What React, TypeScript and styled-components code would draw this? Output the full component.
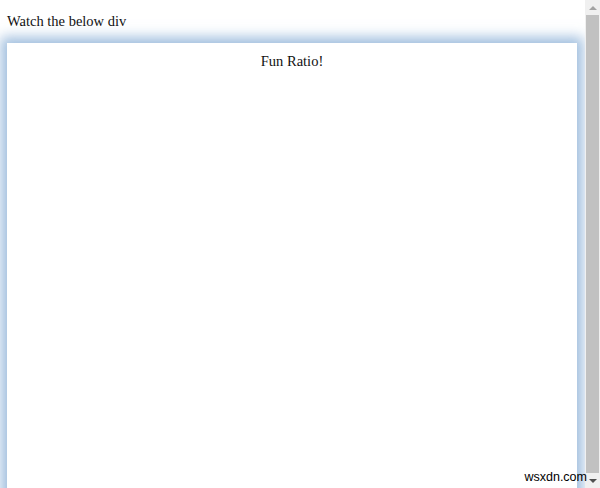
import React from 'react';
import styled, { createGlobalStyle } from 'styled-components';

const GlobalStyle = createGlobalStyle`
    html, body {
        margin: 0;
        padding: 0;
        overflow: hidden;
        background: white;
    }
`;

const Window = styled.div`
    position: relative;
    width: 600px;
    height: 488px;
    display: flex;
    flex-direction: row;
    background: white;
    overflow: hidden;
`;

const Page = styled.div`
    flex: 1;
    padding: 12px 8px 0 7px;
    font-family: "Liberation Serif", "Times New Roman", serif;
    font-size: 14.5px;
    color: #111;
`;

const Intro = styled.div`
    line-height: 18px;
    margin-bottom: 13px;
`;

const GlowBox = styled.div`
    height: 460px;
    background: white;
    box-shadow: 0 0 12px 6px rgba(120, 162, 208, 0.7);
    text-align: center;
    padding-top: 10px;
    line-height: 17px;
`;

const Scrollbar = styled.div`
    width: 15px;
    display: flex;
    flex-direction: column;
    align-items: center;
    background: #f0f0f0;
`;

const Arrow = styled.div<{ $down?: boolean }>`
    height: 15px;
    width: 100%;
    display: flex;
    align-items: center;
    justify-content: center;
    &::after {
        content: '';
        border-left: 4px solid transparent;
        border-right: 4px solid transparent;
        ${p => p.$down ? 'border-top: 4px solid #505050;' : 'border-bottom: 4px solid #a3a3a3;'}
    }
`;

const Thumb = styled.div`
    flex: 1;
    width: 13px;
    background: #c1c1c1;
`;

const Watermark = styled.span`
    position: absolute;
    right: 13px;
    bottom: 4px;
    font-family: "Liberation Sans", Arial, sans-serif;
    font-size: 12.5px;
    line-height: 14px;
    color: #000;
`;

const App = () => {
    return (
        <Window>
            <GlobalStyle />
            <Page>
                <Intro>Watch the below div</Intro>
                <GlowBox>Fun Ratio!</GlowBox>
            </Page>
            <Scrollbar>
                <Arrow />
                <Thumb />
                <Arrow $down />
            </Scrollbar>
            <Watermark>wsxdn.com</Watermark>
        </Window>
    );
}

export default App;
